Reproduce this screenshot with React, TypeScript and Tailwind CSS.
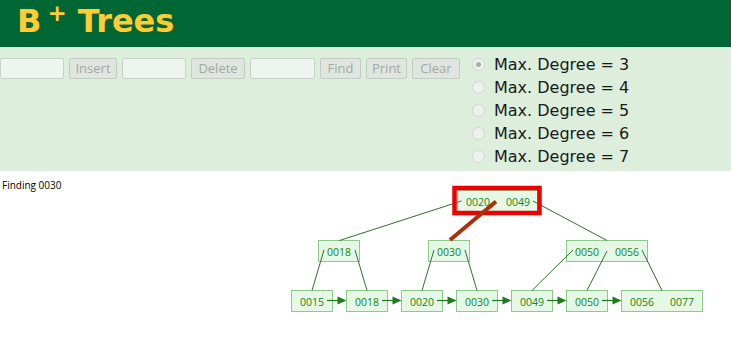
import React from "react";

const G = "#1d7a1d";
const EDGE = "#2f6f2f";

type N = { x: number; y: number; keys: string[] };

const nodes: N[] = [
  { x: 457, y: 190, keys: ["0020", "0049"] },
  { x: 318, y: 240, keys: ["0018"] },
  { x: 428, y: 240, keys: ["0030"] },
  { x: 566, y: 240, keys: ["0050", "0056"] },
  { x: 291, y: 290, keys: ["0015"] },
  { x: 346, y: 290, keys: ["0018"] },
  { x: 401, y: 290, keys: ["0020"] },
  { x: 456, y: 290, keys: ["0030"] },
  { x: 511, y: 290, keys: ["0049"] },
  { x: 566, y: 290, keys: ["0050"] },
  { x: 621, y: 290, keys: ["0056", "0077"] },
];

const edges: [number, number, number, number][] = [
  [461.5, 201, 339.5, 240.5],
  [533, 201, 607, 240.5],
  [324, 250, 312, 290.5],
  [355, 250, 367, 290.5],
  [434, 250, 422, 290.5],
  [465, 250, 477, 290.5],
  [573, 250, 532, 290.5],
  [607, 251, 587, 290.5],
  [642, 250, 662, 290.5],
];

const leaves = [291, 346, 401, 456, 511, 566, 621];

function Tree() {
  return (
    <svg width={731} height={167} viewBox="0 171 731 167" className="block">
      <text x={2} y={189} fontFamily="'Open Sans', sans-serif" fontSize={10} fill="#000">
        Finding 0030
      </text>
      {nodes.map((n, i) => {
        const w = n.keys.length === 1 ? 41 : i === 0 ? 80 : 81;
        return (
          <g key={i}>
            <rect x={n.x + 0.5} y={n.y + 0.5} width={w} height={21} fill="#e6f7e6" stroke="#8ccb8c" strokeWidth={1} />
            {n.keys.map((k, j) => (
              <text
                key={j}
                x={n.x + 0.5 + 20.5 + j * 40}
                y={n.y + 11.5}
                textAnchor="middle"
                dominantBaseline="central"
                fontFamily="'Open Sans', sans-serif"
                fontSize={10.5}
                fill="#158515"
              >
                {k}
              </text>
            ))}
          </g>
        );
      })}
      {edges.map((e, i) => (
        <line key={i} x1={e[0]} y1={e[1]} x2={e[2]} y2={e[3]} stroke={EDGE} strokeWidth={1} />
      ))}
      {leaves.slice(0, -1).map((L, i) => {
        const R = L + 41;
        const nL = leaves[i + 1];
        return (
          <g key={i}>
            <line x1={R - 5} y1={300.5} x2={nL - 7} y2={300.5} stroke={G} strokeWidth={1.2} />
            <polygon points={`${nL - 8.5},296.5 ${nL + 0.5},300.5 ${nL - 8.5},304.5`} fill={G} />
          </g>
        );
      })}
      <rect x={454.5} y={188} width={85} height={25} fill="none" stroke="#ee0000" strokeWidth={4.5} />
      <line x1={496} y1={201.5} x2={450} y2={240} stroke="#a9300c" strokeWidth={4} />
    </svg>
  );
}

export default function App() {
  const btn =
    "h-[21px] border border-[#c3cbc3] bg-[#dfe6df] text-[#a4a8a4] text-[13px] leading-none flex items-center justify-center rounded-[2px]";
  const inp = "h-[21px] border border-[#c9d2c9] bg-[#eef4ee] rounded-[2px]";
  const degrees = [3, 4, 5, 6, 7];
  return (
    <div className="w-[731px] h-[338px] bg-white overflow-hidden">
      <div className="h-[47px] bg-[#006633] pl-[17px] pt-[1px]">
        <h1
          className="text-[32px] font-bold text-[#ffcc33] leading-[40px] whitespace-nowrap"
          style={{ fontFamily: "'DejaVu Sans', sans-serif" }}
        >
          B
          <span className="text-[23px] align-[11px] leading-none ml-[6px]">+</span>
          {" "}Trees
        </h1>
      </div>
      <div
        className="h-[124px] bg-[#ddeedd] flex items-start"
        style={{ fontFamily: "'Open Sans', 'Noto Sans', sans-serif" }}
      >
        <div className="flex gap-[5px] pt-[11px]">
          <div className={`${inp} w-[64px]`} />
          <div className={`${btn} w-[48px]`}>Insert</div>
          <div className={`${inp} w-[64px]`} />
          <div className={`${btn} w-[54px]`}>Delete</div>
          <div className={`${inp} w-[65px]`} />
          <div className={`${btn} w-[41px]`}>Find</div>
          <div className={`${btn} w-[41px]`}>Print</div>
          <div className={`${btn} w-[48px]`}>Clear</div>
        </div>
        <div className="ml-[12px] pt-[6px] flex flex-col" style={{ fontFamily: "'DejaVu Sans', sans-serif" }}>
          {degrees.map((d, i) => (
            <div key={d} className="h-[23px] flex items-center">
              <span className="w-[13px] h-[13px] rounded-full border border-[#cfd6cf] bg-[#eef2ee] flex items-center justify-center">
                {i === 0 && <span className="w-[5px] h-[5px] rounded-full bg-[#a8aca8]" />}
              </span>
              <span className="ml-[9px] text-[16px] text-[#1a1a1a] whitespace-nowrap">Max. Degree = {d}</span>
            </div>
          ))}
        </div>
      </div>
      <Tree />
    </div>
  );
}
